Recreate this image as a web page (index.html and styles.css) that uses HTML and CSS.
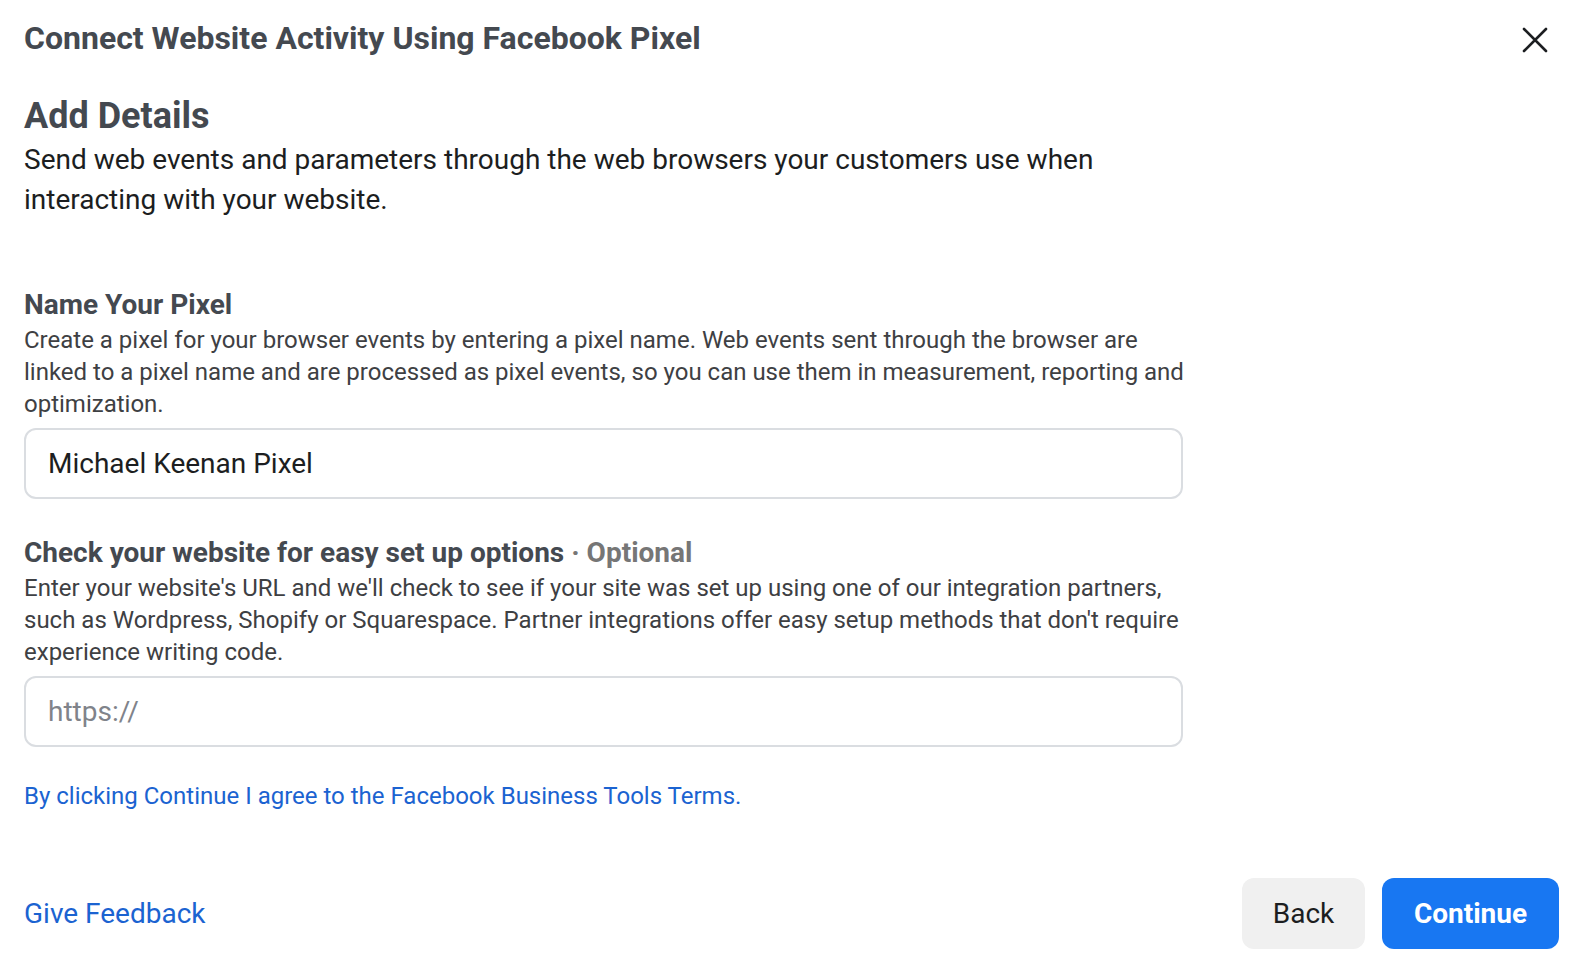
FILE: index.html
```html
<!DOCTYPE html>
<html lang="en">
<head>
    <meta charset="UTF-8">
    <title>Connect Website Activity Using Facebook Pixel</title>
    <link rel="stylesheet" href="styles.css">
</head>
<body>
    <div class="dialog">
        <!-- Header -->
        <header class="dialog-header">
            <h1>Connect Website Activity Using Facebook Pixel</h1>
            <button class="close-btn" aria-label="Close">
                <svg width="26" height="26" viewBox="0 0 26 26">
                    <path d="M2 2 L24 24 M24 2 L2 24" stroke="#1c1e21" stroke-width="2.6" stroke-linecap="round" fill="none"/>
                </svg>
            </button>
        </header>

        <!-- Intro -->
        <section class="intro">
            <h2>Add Details</h2>
            <p>Send web events and parameters through the web browsers your customers use when interacting with your website.</p>
        </section>

        <!-- Pixel name -->
        <div class="field field-first">
            <h3>Name Your Pixel</h3>
            <p>Create a pixel for your browser events by entering a pixel name. Web events sent through the browser are linked to a pixel name and are processed as pixel events, so you can use them in measurement, reporting and optimization.</p>
            <input type="text" class="text-input" value="Michael Keenan Pixel">
        </div>

        <!-- Website URL -->
        <div class="field">
            <h3>Check your website for easy set up options <span class="optional">&middot; Optional</span></h3>
            <p>Enter your website's URL and we'll check to see if your site was set up using one of our integration partners, such as Wordpress, Shopify or Squarespace. Partner integrations offer easy setup methods that don't require experience writing code.</p>
            <input type="text" class="text-input" placeholder="https://">
        </div>

        <a class="terms-link" href="#">By clicking Continue I agree to the Facebook Business Tools Terms.</a>

        <!-- Footer -->
        <footer class="dialog-footer">
            <a class="feedback-link" href="#">Give Feedback</a>
            <div class="actions">
                <button class="btn btn-back">Back</button>
                <button class="btn btn-continue">Continue</button>
            </div>
        </footer>
    </div>
</body>
</html>
```

FILE: styles.css
```css
body {
    margin: 0;
    font-family: Roboto, "Liberation Sans", Arial, sans-serif;
    background: #fff;
    color: #1c1e21;
}

.dialog {
    padding: 19px 25px 5px 24px;
}

/* Header */
.dialog-header {
    display: flex;
    justify-content: space-between;
    align-items: center;
}

.dialog-header h1 {
    margin: 0;
    font-size: 32px;
    line-height: 38px;
    font-weight: 700;
    color: #444950;
}

.close-btn {
    background: none;
    border: none;
    padding: 0;
    margin: 4px 11px 0 0;
    cursor: pointer;
    display: flex;
}

/* Intro */
.intro {
    margin-top: 37px;
}

.intro h2 {
    margin: 0;
    font-size: 36px;
    line-height: 44px;
    font-weight: 700;
    color: #444950;
}

.intro p {
    margin: 2px 0 0;
    font-size: 28px;
    line-height: 40px;
    color: #1c1e21;
    max-width: 1160px;
}

/* Fields */
.field {
    width: 1159px;
    margin-top: 37px;
}

.field-first {
    margin-top: 68px;
}

.field h3 {
    margin: 0;
    font-size: 28px;
    line-height: 34px;
    font-weight: 700;
    color: #444950;
}

.optional {
    color: #767676;
}

.field p {
    width: 1168px;
    margin: 2px 0 0;
    font-size: 24px;
    line-height: 32px;
    color: #3e4043;
}

.text-input {
    display: block;
    box-sizing: border-box;
    width: 100%;
    height: 71px;
    margin-top: 8px;
    padding: 0 22px;
    border: 2px solid #dadde1;
    border-radius: 12px;
    font-family: inherit;
    font-size: 28px;
    color: #1c1e21;
    outline: none;
}

.text-input::placeholder {
    color: #80838a;
}

.terms-link {
    display: block;
    margin-top: 34px;
    font-size: 24px;
    line-height: 31.5px;
    color: #1b63d1;
    text-decoration: none;
}

/* Footer */
.dialog-footer {
    display: flex;
    justify-content: space-between;
    align-items: center;
    margin-top: 65px;
}

.feedback-link {
    font-size: 28px;
    color: #1b63d1;
    text-decoration: none;
}

.actions {
    display: flex;
    gap: 17px;
}

.btn {
    height: 71px;
    border: none;
    border-radius: 12px;
    font-family: inherit;
    font-size: 28px;
    cursor: pointer;
}

.btn-back {
    width: 123px;
    background: #f0f0f0;
    color: #1c1e21;
}

.btn-continue {
    width: 177px;
    background: #1877f2;
    color: #fff;
    font-weight: 700;
}
```
